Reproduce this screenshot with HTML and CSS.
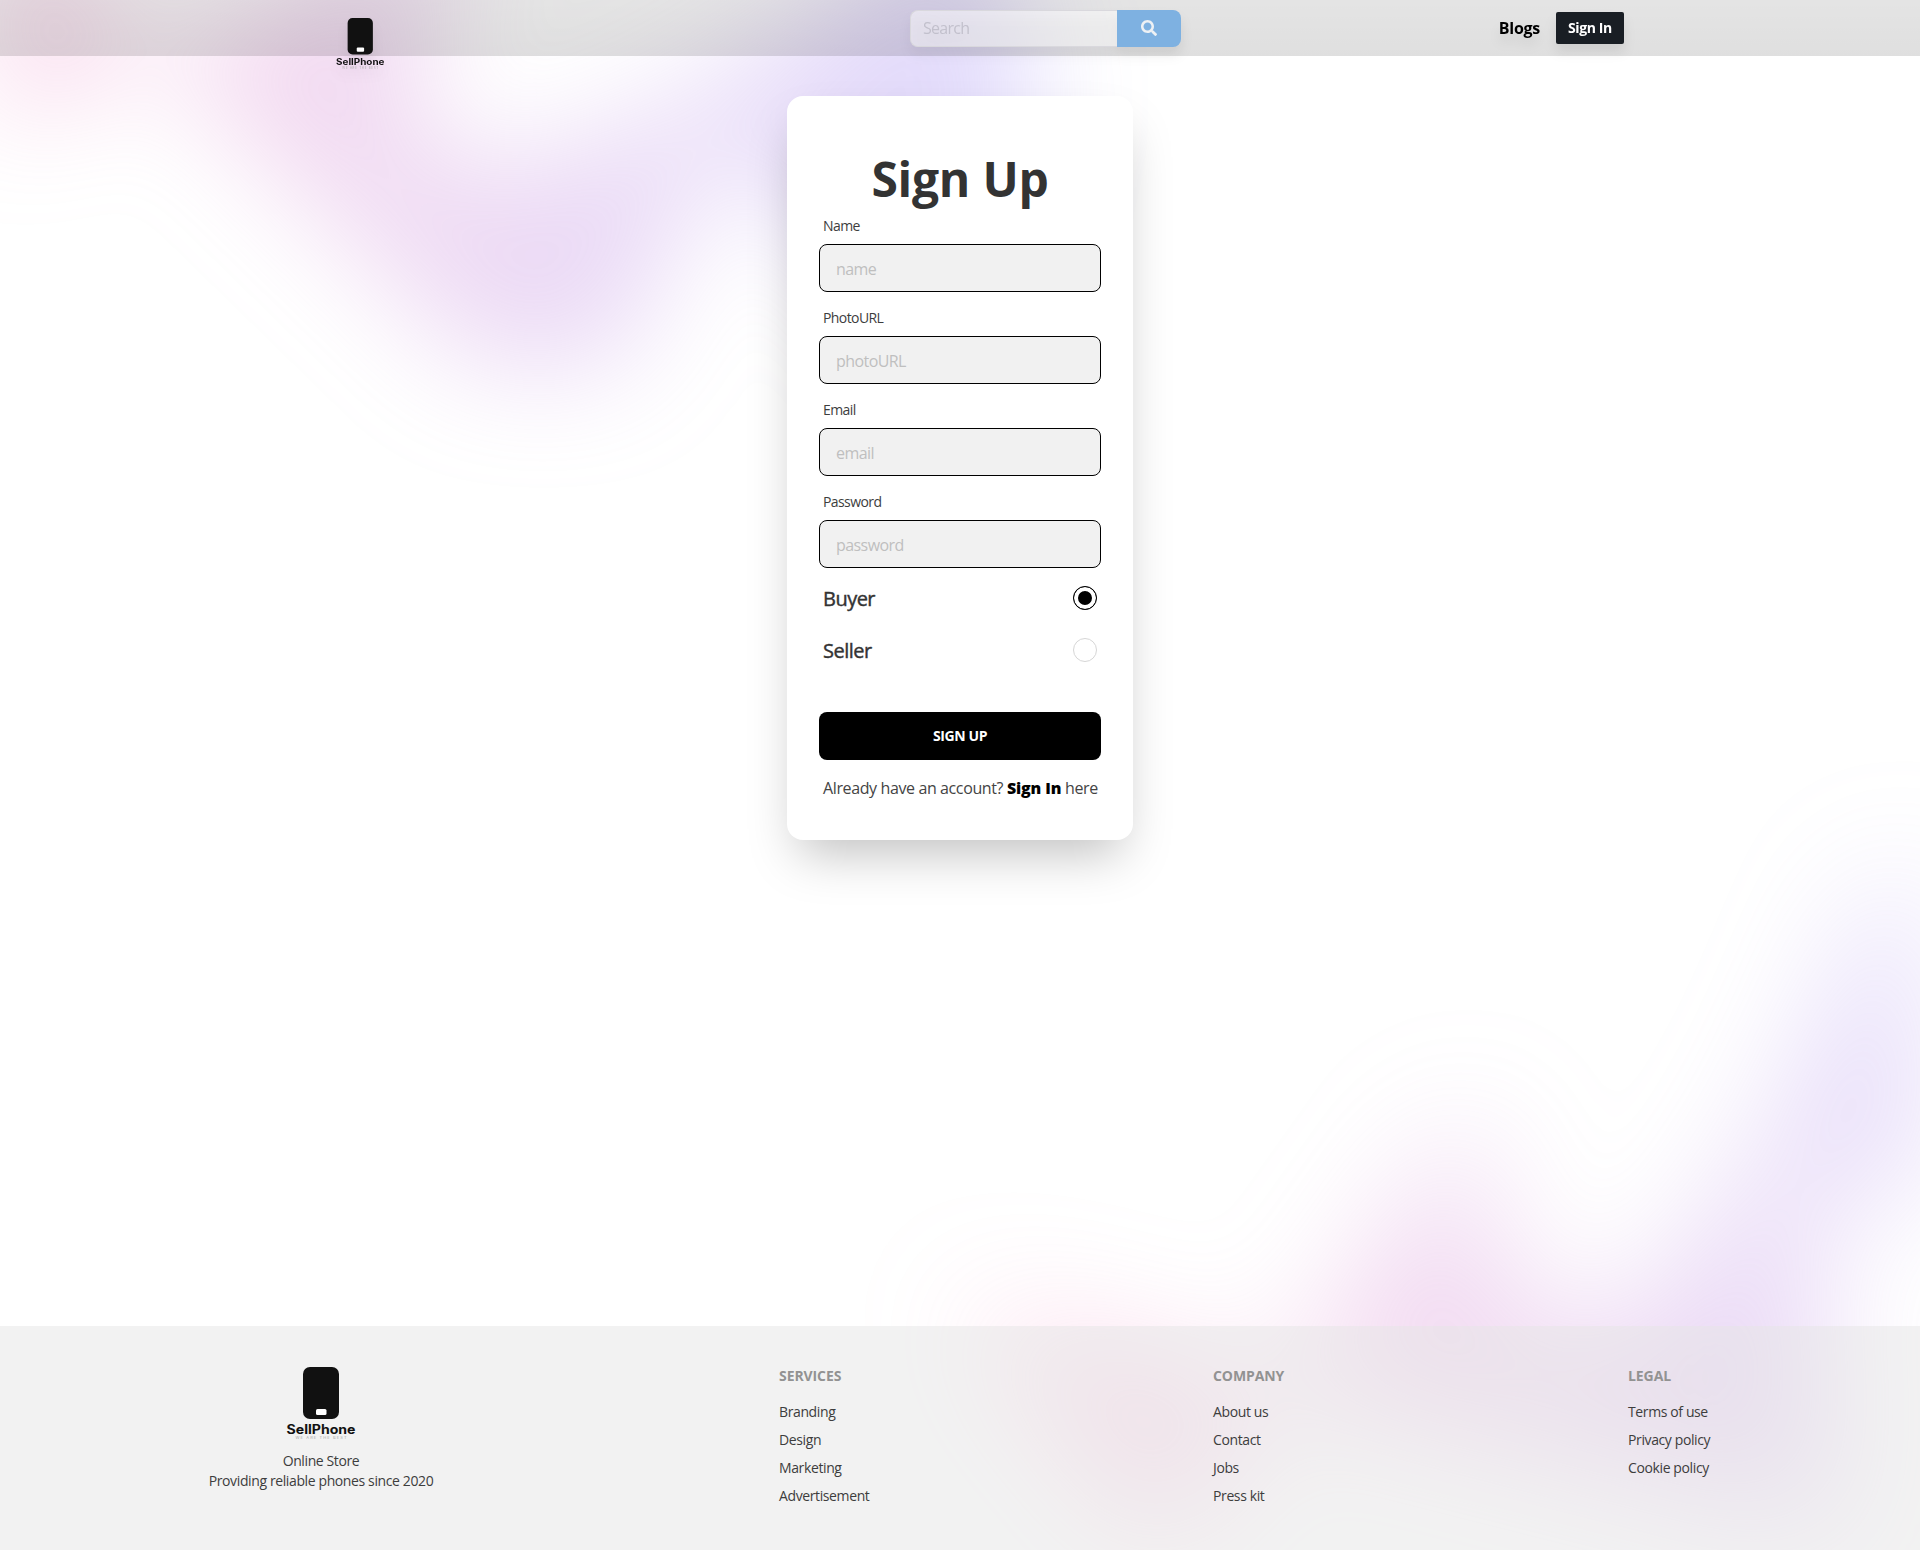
FILE: index.html
```html
<!DOCTYPE html>
<html lang="en">
<head>
<meta charset="utf-8">
<title>SellPhone - Sign Up</title>
<link rel="stylesheet" href="styles.css">
</head>
<body>
<svg class="defs" width="0" height="0" aria-hidden="true">
  <defs>
    <linearGradient id="blob-fill" x1="1155.49" x2="-78.208" y1=".177" y2="474.645" gradientUnits="userSpaceOnUse">
      <stop stop-color="#9089FC"/><stop offset="1" stop-color="#FF80B5"/>
    </linearGradient>
    <path id="blob" fill="url(#blob-fill)" fill-opacity=".3" d="M317.219 518.975L203.852 678 0 438.341l317.219 80.634 204.172-286.402c1.307 132.337 45.083 346.658 209.733 145.248C936.936 126.058 882.053-94.234 1031.02 41.331c119.18 108.451 130.68 295.337 121.53 375.223L855 299l21.173 362.054-558.954-142.079z"/>
    <symbol id="logo" viewBox="0 0 72 76">
      <rect x="18" y="1" width="36" height="52" rx="7" fill="#111"/>
      <rect x="31" y="43" width="10.500" height="6" rx="1.500" fill="#fff"/>
      <text x="36" y="67.500" text-anchor="middle" textLength="69" lengthAdjust="spacingAndGlyphs" class="logo-name">SellPhone</text>
      <text x="36" y="73" text-anchor="middle" textLength="51" class="logo-tag">WE ARE THE BEST</text>
    </symbol>
  </defs>
</svg>
<div class="page">
  <div class="glow glow-top"><svg viewBox="0 0 1155 678"><use href="#blob"/></svg></div>
  <div class="glow glow-bottom"><svg viewBox="0 0 1155 678"><use href="#blob"/></svg></div>
  <header class="navbar">
    <svg class="nav-logo"><use href="#logo"/></svg>
    <form class="search">
      <input type="text" placeholder="Search">
      <button type="button" aria-label="Search"><svg viewBox="0 0 512 512" width="16" height="16"><path fill="#eef1f4" d="M505 442.700 405.300 343c-4.500-4.500-10.600-7-17-7H372c27.600-35.300 44-79.700 44-128C416 93.100 322.900 0 208 0S0 93.100 0 208s93.100 208 208 208c48.300 0 92.700-16.400 128-44v16.300c0 6.400 2.500 12.500 7 17l99.700 99.700c9.400 9.400 24.600 9.400 33.900 0l28.300-28.300c9.400-9.400 9.400-24.600.1-34zM208 336c-70.700 0-128-57.200-128-128 0-70.700 57.200-128 128-128 70.700 0 128 57.200 128 128 0 70.700-57.200 128-128 128z"/></svg></button>
    </form>
    <nav class="nav-links"><a class="blogs">Blogs</a><a class="signin">Sign In</a></nav>
  </header>
  <main class="main">
    <form class="card">
      <h1>Sign Up</h1>
      <label class="field"><span>Name</span><input type="text" placeholder="name"></label>
      <label class="field"><span>PhotoURL</span><input type="text" placeholder="photoURL"></label>
      <label class="field"><span>Email</span><input type="text" placeholder="email"></label>
      <label class="field"><span>Password</span><input type="password" placeholder="password"></label>
      <label class="role"><span>Buyer</span><input type="radio" name="role" checked></label>
      <label class="role"><span>Seller</span><input type="radio" name="role"></label>
      <button type="button" class="submit">SIGN UP</button>
      <p class="hint">Already have an account? <b>Sign In</b> here</p>
    </form>
  </main>
  <footer class="footer">
    <div class="brand">
      <svg class="foot-logo"><use href="#logo"/></svg>
      <p>Online Store<br>Providing reliable phones since 2020</p>
    </div>
    <div class="links"><h2>SERVICES</h2><a>Branding</a><a>Design</a><a>Marketing</a><a>Advertisement</a></div>
    <div class="links"><h2>COMPANY</h2><a>About us</a><a>Contact</a><a>Jobs</a><a>Press kit</a></div>
    <div class="links"><h2>LEGAL</h2><a>Terms of use</a><a>Privacy policy</a><a>Cookie policy</a></div>
  </footer>
</div>
</body>
</html>
```
FILE: styles.css
```css
* { box-sizing: border-box; }
body { margin: 0; background: #fff; color: #333; font-family: "Open Sans", "Noto Sans", sans-serif; font-size: 16px; line-height: 24px; letter-spacing: -.024em; }
.defs { position: absolute; }
.page { position: relative; min-height: 1550px; display: flex; flex-direction: column; overflow: hidden; isolation: isolate; }
input, button { font: inherit; letter-spacing: inherit; margin: 0; }

.glow { position: absolute; left: 0; right: 0; z-index: -1; overflow: hidden; filter: blur(56px); }
.glow svg { position: relative; display: block; width: 1155px; height: 678px; max-width: none; }
.glow-top { top: -310px; }
.glow-top svg { left: calc(50% - 488px); transform: translateX(-50%) rotate(30deg); }
.glow-bottom { top: 868px; filter: blur(62px); }
.glow-bottom svg { left: calc(50% + 576px); transform: translateX(-50%); }

.logo-name { font: 700 12.500px Inter, sans-serif; letter-spacing: 0; fill: #111; }
.logo-tag { font: 400 4px Inter, sans-serif; letter-spacing: 0; fill: #aaa; }

.navbar { height: 56px; display: grid; grid-template: 56px / 911px 1fr auto; padding-right: 296px; align-items: center; background: linear-gradient(rgba(0,0,0,.105), rgba(0,0,0,.125)); }
.nav-logo { width: 50.500px; height: 54px; margin-left: 334.500px; align-self: start; margin-top: 17px; filter: drop-shadow(0 8px 6px rgba(0,0,0,.06)); }
.search { display: flex; width: 271px; height: 37px; margin-left: -1px; border-radius: 8px; filter: drop-shadow(0 8px 6px rgba(0,0,0,.08)); }
.search input { width: 207px; padding: 0 12px; border: 1px solid #d9d8dd; border-right: 0; border-radius: 8px 0 0 8px; background: rgba(255,255,255,.5); outline: 0; letter-spacing: -.044em; }
.search input::placeholder { color: #c2c0cc; opacity: 1; }
.search button { width: 64px; border: 0; border-radius: 0 8px 8px 0; background: #7eb1e1; display: grid; place-items: center; }
.nav-links { display: flex; align-items: center; gap: 16px; filter: drop-shadow(0 8px 6px rgba(0,0,0,.08)); }
.blogs { color: #000; font-weight: 700; letter-spacing: -.017em; }
.signin { width: 68px; height: 32px; border-radius: 2px; background: #191e24; color: #fff; font-size: 14px; font-weight: 700; line-height: 32px; text-align: center; }

.main { flex: 1; display: flex; justify-content: center; align-items: flex-start; padding-top: 40px; }
.card { width: 346px; height: 744px; padding: 59px 32px 40px; border-radius: 16px; background: #fff; box-shadow: 0 25px 50px -12px rgba(0,0,0,.25); display: flex; flex-direction: column; }
.card h1 { margin: 0 0 5px; font-size: 48px; line-height: 48px; font-weight: 700; letter-spacing: -.005em; text-align: center; }
.field { display: flex; flex-direction: column; margin-bottom: 8px; }
.field span { padding: 8px 4px; color: #3d3d3d; font-size: 14px; line-height: 20px; letter-spacing: -.042em; }
.field input { height: 48px; padding: 2px 16px 0; border: 1px solid #000; border-radius: 8px; background: #f1f1f1; outline: 0; letter-spacing: -.036em; }
.field input::placeholder { color: #bfbfbf; opacity: 1; }
.role { display: flex; justify-content: space-between; align-items: center; height: 44px; padding: 0 4px; margin-bottom: 8px; font-size: 20px; letter-spacing: -.026em; }
.role span { padding-top: 2px; -webkit-text-stroke: .4px #333; }
.role input { appearance: none; width: 24px; height: 24px; border: 1px solid #d6d6d6; border-radius: 50%; background: #fff; }
.role input:checked { border-color: #000; background: #000; box-shadow: 0 0 0 4px #fff inset; }
.submit { height: 48px; margin-top: 32px; border: 0; border-radius: 8px; background: #000; color: #fff; font-size: 14px; font-weight: 700; }
.hint { margin: 16px 4px 0; color: #444; white-space: nowrap; }
.hint b { color: #000; font-weight: 800; letter-spacing: -.008em; }

.footer { height: 224px; padding: 40px 208px; background: rgba(229,229,229,.5); color: #3d3d3d; display: grid; grid-template-columns: 571px 434px 415px auto; font-size: 14px; line-height: 20px; }
.brand { width: 226px; display: flex; flex-direction: column; align-items: center; text-align: center; white-space: nowrap; }
.brand p { margin: 9px 0 0; }
.foot-logo { width: 72px; height: 76px; }
.links { display: flex; flex-direction: column; gap: 8px; }
.links h2 { margin: 0 0 8px; font-size: 14px; line-height: 20px; font-weight: 700; color: #929292; letter-spacing: -.006em; }
```
